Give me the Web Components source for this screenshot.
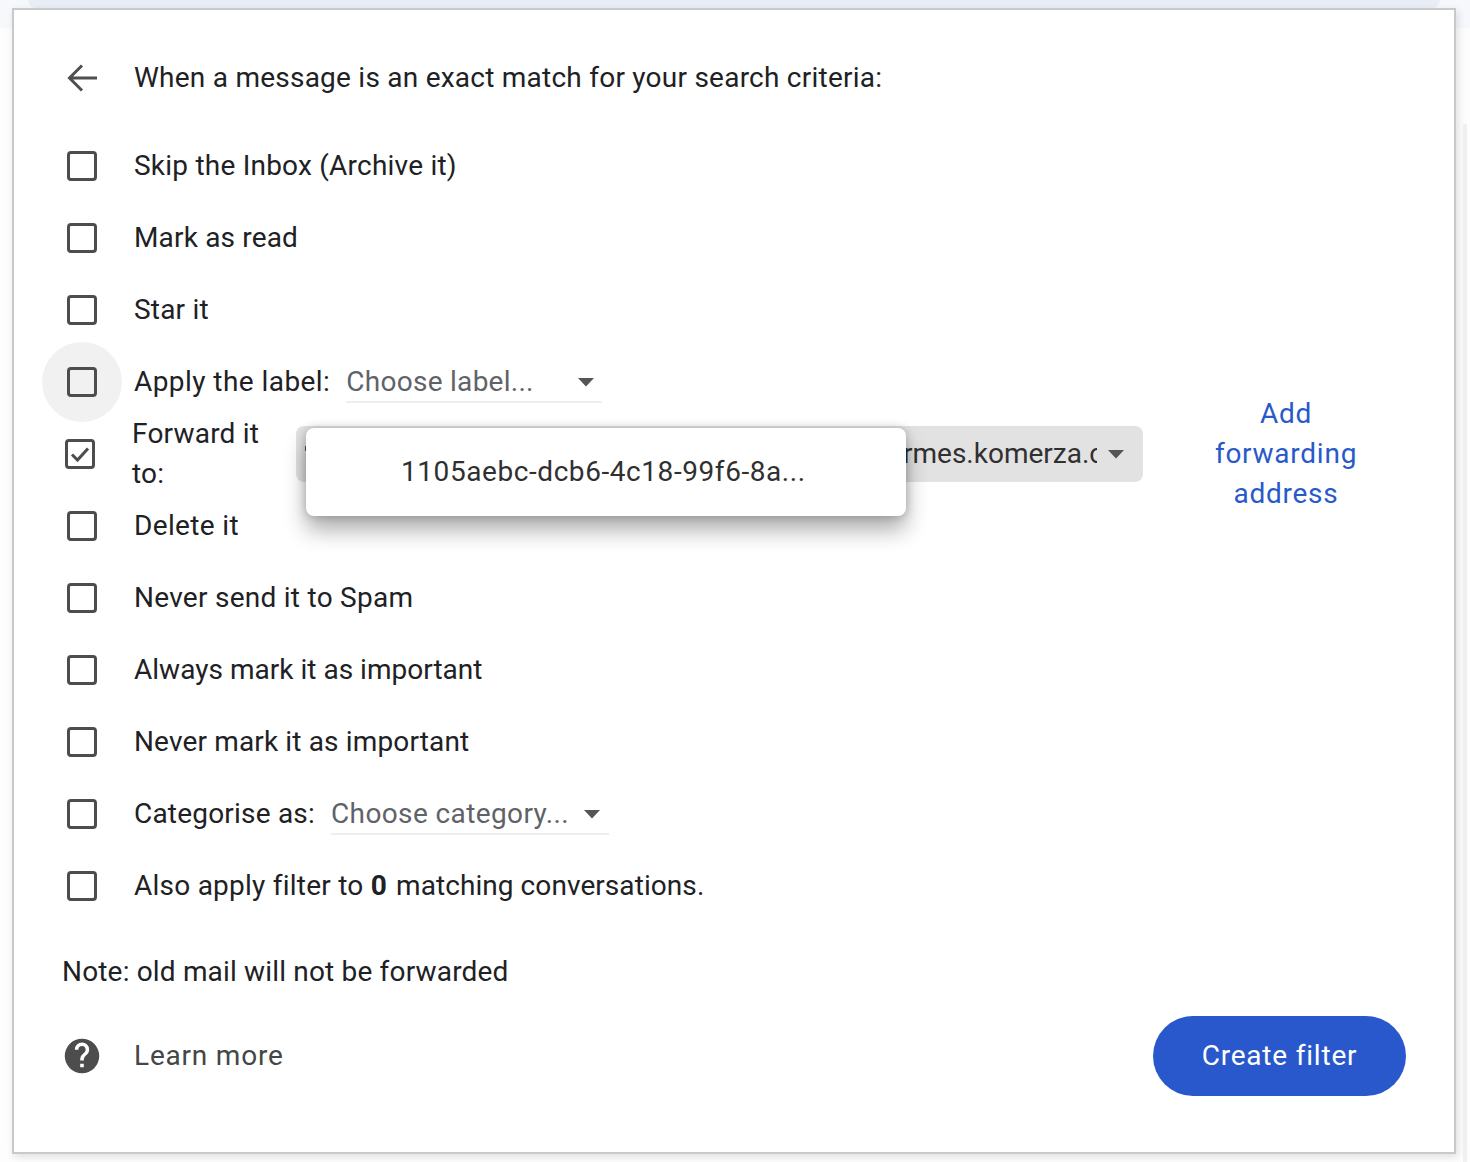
<!DOCTYPE html>
<html lang="en"><head><meta charset="utf-8"><title>Filter</title>
<style>
html,body{margin:0;padding:0;background:#f6f8fc;height:1162px;overflow:hidden}
body{font-family:Roboto,"Liberation Sans",sans-serif;color:#202124}
</style></head><body>
<filter-page>
  <filter-dialog>
    <filter-head style="letter-spacing:.24px">When a message is an exact match for your search criteria:</filter-head>
    <filter-row style="letter-spacing:.22px">Skip the Inbox (Archive it)</filter-row>
    <filter-row style="letter-spacing:.17px">Mark as read</filter-row>
    <filter-row style="letter-spacing:.2px">Star it</filter-row>
    <filter-row hover style="letter-spacing:.44px">Apply the label:<filter-select style="--w:256px;--gap:16px;--arrow-left:231px;letter-spacing:.27px">Choose label...</filter-select></filter-row>
    <forward-row></forward-row>
    <filter-row style="letter-spacing:.36px">Delete it</filter-row>
    <filter-row style="letter-spacing:.27px">Never send it to Spam</filter-row>
    <filter-row style="letter-spacing:.02px">Always mark it as important</filter-row>
    <filter-row style="letter-spacing:.15px">Never mark it as important</filter-row>
    <filter-row style="letter-spacing:.2px">Categorise as:<filter-select style="--w:278px;--gap:16px;--arrow-left:252px;letter-spacing:.39px">Choose category...</filter-select></filter-row>
    <filter-row style="letter-spacing:.24px"><span style="white-space:pre">Also apply filter to <b style="letter-spacing:2px;font-weight:700">0</b> <span style="letter-spacing:.07px">matching conversations.</span></span></filter-row>
    <filter-foot></filter-foot>
  </filter-dialog>
</filter-page>
<script>
function def(name, css, html){
  customElements.define(name, class extends HTMLElement{
    constructor(){super();const r=this.attachShadow({mode:'open'});r.innerHTML='<style>'+css+'</style>'+html;}
  });
}
const box='<svg width="32" height="32" viewBox="0 0 32 32"><rect x="2.5" y="2.5" width="27" height="27" rx="2.5" fill="none" stroke="#4d4d4d" stroke-width="3"/></svg>';
const arrow='<svg width="18" height="10" viewBox="0 0 18 10"><path d="M1 1h16l-8 8.5z" fill="#555"/></svg>';
def('filter-page',`:host{display:block;width:1470px;height:1162px;position:relative;overflow:hidden;background:linear-gradient(#f6f8fc 28px,#fdfdfe 28px)}
.band{height:8px;margin:0 30px 0 28px;background:#e9eef6;border-radius:0 0 24px 24px}
.line{position:absolute;left:1463px;top:124px;width:4px;bottom:0;background:#f1f1f1}`,`<div class="band"></div><div class="line"></div><slot></slot>`);
def('filter-dialog',`:host{display:block;position:relative;box-sizing:border-box;margin-left:12px;width:1444px;height:1146px;background:#fff;
border:2px solid #c9c9c9;padding:32px 0 0 52px;box-shadow:2px 3px 8px rgba(0,0,0,.12);
font-size:28px;letter-spacing:0}`,`<slot></slot>`);
def('filter-head',`:host{display:flex;align-items:center;height:72px;margin-bottom:16px;font-size:28px;color:#202124}
svg{flex:none;margin-right:34px}
span{padding-bottom:2px}`,
`<svg width="34" height="34" viewBox="0 0 34 34"><path d="M31 17H5M16 4.5 3.5 17 16 29.5" fill="none" stroke="#4f4f4f" stroke-width="3"/></svg><span><slot></slot></span>`);
def('filter-row',`:host{display:flex;align-items:center;height:72px;white-space:pre-wrap}
.cb{flex:none;width:32px;height:32px;margin-right:36px;position:relative;display:flex}
:host([hover]) .cb::before{content:"";position:absolute;left:-24px;top:-24px;width:80px;height:80px;border-radius:50%;background:#f1f1f1}
svg{position:relative}
.t{display:flex;align-items:center;white-space:pre;padding-bottom:2px}`,
`<div class="cb">${box}</div><span class="t"><slot></slot></span>`);
def('filter-select',`:host{display:block;position:relative;box-sizing:border-box;width:var(--w);margin-left:var(--gap);height:44px;line-height:46px;color:#5f6368;border-bottom:2px solid #eee}
svg{position:absolute;left:var(--arrow-left);top:18px}`,`<slot></slot>${arrow}`);
def('forward-row',`:host{display:flex;height:72px;position:relative;font-size:28px}
.cb{flex:none;width:32px;height:32px;margin:20px 36px 0 -2px}
.lbl{width:132px;line-height:40px;margin-top:-4px;flex:none;white-space:normal;letter-spacing:.2px}
.sel{flex:none;box-sizing:border-box;width:847px;height:56px;margin:8px 0 0 32px;background:#e2e2e2;border-radius:8px;position:relative;overflow:hidden}
.val{position:absolute;left:607px;top:0;width:194px;height:56px;line-height:56px;overflow:hidden;white-space:nowrap;color:#303030}
.tick{position:absolute;left:9px;top:20px;width:2px;height:5px;background:#555}
.sel svg{position:absolute;left:811px;top:23px}
.add{flex:none;width:160px;margin:-24px 0 0 63px;text-align:center;line-height:40px;color:#2859cb;height:120px;letter-spacing:.75px}
.menu{position:absolute;left:240px;top:10px;width:600px;height:88px;box-sizing:border-box;background:#fff;border-radius:8px;
box-shadow:0 14px 22px rgba(0,0,0,.32),0 0 10px rgba(0,0,0,.22);padding-left:95px;line-height:88px;color:#303030;white-space:nowrap;letter-spacing:.57px}`,
`<div class="cb">${box.replace('</svg>','<path d="M8 16.5l5.5 5.5L24 10.5" fill="none" stroke="#4d4d4d" stroke-width="3"/></svg>')}</div>
<div class="lbl">Forward it to:</div>
<div class="sel"><div class="tick"></div><div class="val">rmes.komerza.com</div>${arrow}</div>
<div class="add">Add forwarding address</div>
<div class="menu">1105aebc-dcb6-4c18-99f6-8a...</div>`);
customElements.define('filter-foot', class extends HTMLElement{
  constructor(){super();const r=this.attachShadow({mode:'open'});r.innerHTML=`<style>
:host{display:block}
.note{height:40px;line-height:40px;margin:30px 0 0 -4px;color:#202124;letter-spacing:.17px}
.bar{display:flex;align-items:center;justify-content:space-between;margin-top:24px;height:80px;padding-right:48px}
.lm{display:flex;align-items:center;color:#444746;font-weight:400;font-size:28px;letter-spacing:.8px}
.lm span{padding-bottom:2px}
svg{margin:0 34px 0 -2px}
.btn{display:block;width:253px;height:80px;border-radius:40px;background:#2858cb;color:#fff;line-height:80px;text-align:center;font-weight:400;font-size:28px;letter-spacing:.8px}
</style><div class="note">Note: old mail will not be forwarded</div>
<div class="bar"><div class="lm"><svg width="36" height="36" viewBox="0 0 24 24"><path fill="#4d4d4d" d="M12 .5a11.5 11.5 0 1 0 0 23 11.5 11.5 0 0 0 0-23zm1.2 19h-2.4v-2.4h2.4zm2.5-8.9-1.1 1.1c-.9.9-1.4 1.6-1.4 3.3h-2.4v-.6c0-1.3.5-2.5 1.4-3.4l1.5-1.5c.4-.4.7-1 .7-1.7a2.4 2.4 0 0 0-4.8 0H7.2a4.8 4.8 0 0 1 9.6 0c0 1-.4 2-1.1 2.8z"/></svg><span>Learn more</span></div><div class="btn">Create filter</div></div>`;}
});
</script></body></html>
